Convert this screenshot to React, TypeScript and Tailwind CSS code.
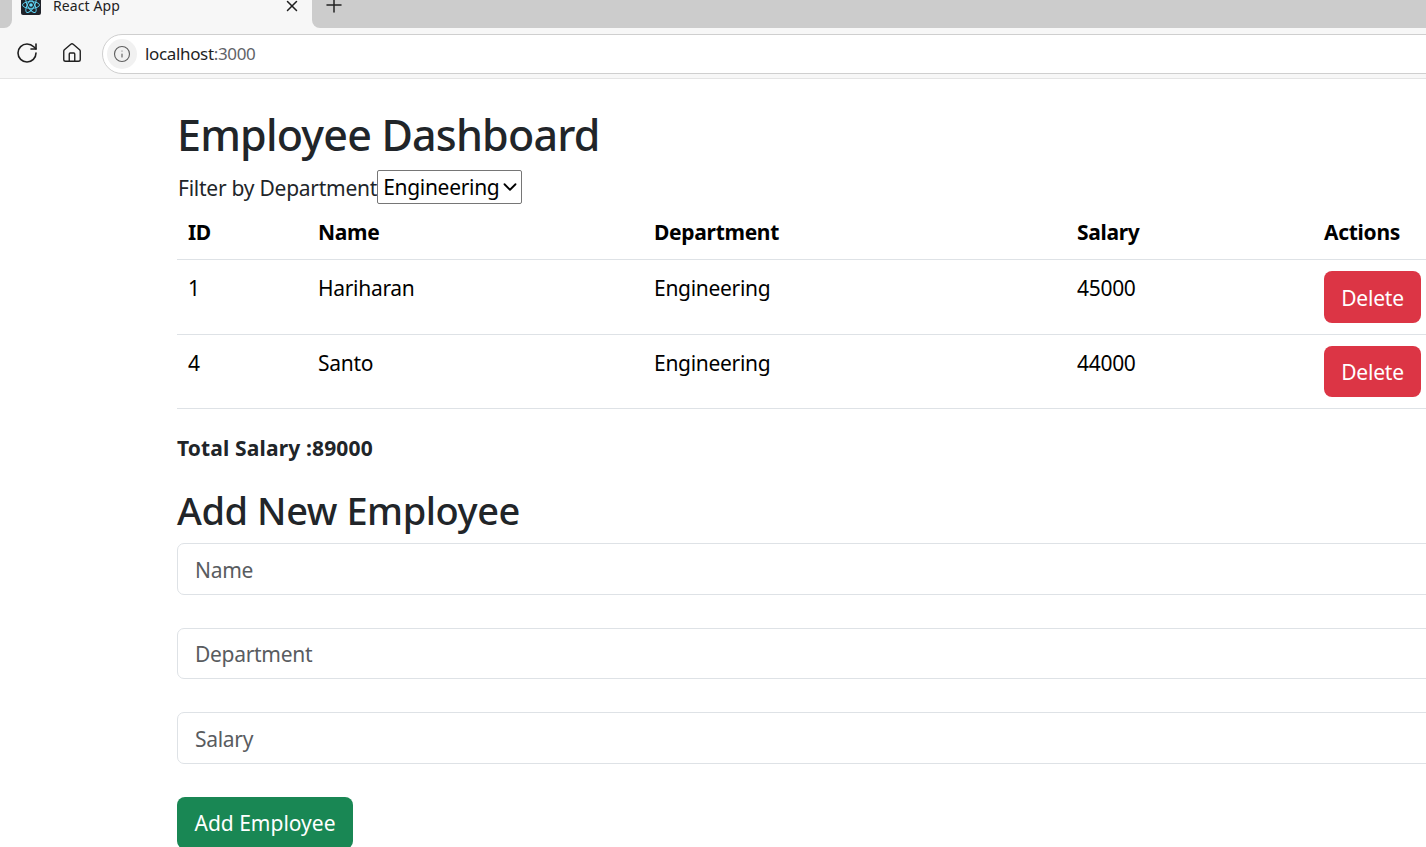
import React from "react";
import { RotateCw, Home, X, Plus, Info, ChevronDown } from "lucide-react";

const rows = [
  { id: 1, name: "Hariharan", dept: "Engineering", salary: 45000, h: "h-[75px]", btn: "h-[52px]" },
  { id: 4, name: "Santo", dept: "Engineering", salary: 44000, h: "h-[74px]", btn: "h-[51px]" },
];

function ReactLogo() {
  return (
    <svg viewBox="0 0 20 20" className="w-[20px] h-[20px] shrink-0 rounded-[2px] bg-[#20232a] -mt-[5px]">
      <circle cx="10" cy="10" r="1.8" fill="#61dafb" />
      <g fill="none" stroke="#61dafb" strokeWidth="0.9">
        <ellipse cx="10" cy="10" rx="8.5" ry="3.4" />
        <ellipse cx="10" cy="10" rx="8.5" ry="3.4" transform="rotate(60 10 10)" />
        <ellipse cx="10" cy="10" rx="8.5" ry="3.4" transform="rotate(120 10 10)" />
      </g>
    </svg>
  );
}

function Field({ placeholder, cls }: { placeholder: string; cls: string }) {
  return (
    <input
      placeholder={placeholder}
      className={`block w-[1300px] shrink-0 px-[17px] pt-[2px] rounded-[7px] border border-[#dee2e6] bg-white text-[21px] tracking-[-0.3px] text-[#212529] placeholder:text-[#595c5f] outline-none ${cls}`}
    />
  );
}

export default function App() {
  return (
    <div className="w-[1426px] h-[847px] overflow-hidden bg-white font-['Noto_Sans','Open_Sans',sans-serif] text-[#212529]">
      <div className="h-[28px] bg-[#f7f7f7] flex items-start overflow-hidden">
        <div className="w-[12px] h-full shrink-0 bg-[#cccccc] rounded-br-[8px]" />
        <div className="w-[300px] h-full shrink-0 flex items-start pl-[9px] pr-[11px]">
          <ReactLogo />
          <span className="ml-[12px] text-[14px] leading-[20px] text-[#1f1f1f] -mt-[4px] tracking-[0.1px] whitespace-nowrap">React App</span>
          <X className="ml-auto -mt-[3px] shrink-0 text-[#1f1f1f]" size={18} strokeWidth={2} />
        </div>
        <div className="flex-1 h-full bg-[#cccccc] rounded-bl-[8px] flex items-start pl-[10px]">
          <Plus className="-mt-[7px] shrink-0 text-[#222]" size={24} strokeWidth={1.5} />
        </div>
      </div>
      <div className="h-[51px] bg-[#f7f7f7] border-b border-[#e4e4e4] flex items-center overflow-hidden">
        <RotateCw className="ml-[15px] shrink-0 text-[#1f1f1f]" size={24} strokeWidth={1.6} />
        <Home className="ml-[22px] shrink-0 text-[#1f1f1f]" size={22} strokeWidth={1.5} />
        <div className="ml-[19px] mt-[2px] w-[1400px] h-[40px] shrink-0 rounded-[20px] border border-[#cfcfcf] bg-white flex items-center pl-[4px]">
          <div className="w-[30px] h-[30px] rounded-full bg-[#f1f1f1] flex items-center justify-center">
            <Info className="text-[#5f5f5f]" size={18} strokeWidth={1.5} />
          </div>
          <span className="ml-[8px] text-[17px] tracking-[-0.35px] text-[#1f1f1f]">
            localhost<span className="text-[#5f6368]">:3000</span>
          </span>
        </div>
      </div>

      <div className="pl-[177px] w-[1500px]">
        <h1 className="pt-[27px] h-[91px] text-[43px] leading-[58px] font-medium tracking-[-0.8px]">Employee Dashboard</h1>
        <div className="h-[34px] flex items-center text-[21px]">
          <span className="pt-[4px] pl-[1px] tracking-[-0.25px] text-[#212529]">Filter by Department</span>
          <div className="relative">
            <select className="block w-[145px] h-[34px] pt-[1px] appearance-none border border-[#767676] rounded-[2px] bg-white text-black pl-[5px] tracking-[-0.3px] outline-none">
              <option>Engineering</option>
            </select>
            <ChevronDown className="absolute right-[1px] top-[6px] text-black pointer-events-none" size={22} strokeWidth={2} />
          </div>
        </div>
        <table className="w-[1255px] border-collapse text-[21px] tracking-[-0.3px] text-black table-fixed">
          <thead>
            <tr className="h-[55px] border-b border-[#dee2e6]">
              <th className="w-[130px] text-left font-bold px-[11px] pt-[2px]">ID</th>
              <th className="w-[336px] text-left font-bold px-[11px] pt-[2px]">Name</th>
              <th className="w-[423px] text-left font-bold px-[11px] pt-[2px]">Department</th>
              <th className="w-[247px] text-left font-bold px-[11px] pt-[2px]">Salary</th>
              <th className="text-left font-bold px-[11px] pt-[2px]">Actions</th>
            </tr>
          </thead>
          <tbody>
            {rows.map((r) => (
              <tr key={r.id} className={`${r.h} border-b border-[#dee2e6]`}>
                <td className="px-[11px] pt-[13px] align-top">{r.id}</td>
                <td className="px-[11px] pt-[13px] align-top">{r.name}</td>
                <td className="px-[11px] pt-[13px] align-top">{r.dept}</td>
                <td className="px-[11px] pt-[13px] align-top">{r.salary}</td>
                <td className="px-[11px] align-middle">
                  <button className={`w-[97px] ${r.btn} pt-[4px] rounded-[8px] bg-[#dc3545] text-white text-[21px] tracking-[-0.2px] flex items-center justify-center`}>Delete</button>
                </td>
              </tr>
            ))}
          </tbody>
        </table>
        <h5 className="mt-[24px] h-[31px] text-[21px] leading-[31px] font-bold tracking-[0.15px]">Total Salary :89000</h5>
        <h2 className="mt-[20px] h-[52px] text-[38px] leading-[52px] font-medium tracking-[-0.45px]">Add New Employee</h2>
        <Field placeholder="Name" cls="h-[52px] mt-[7px] mb-[33px]" />
        <Field placeholder="Department" cls="h-[51px] mb-[33px]" />
        <Field placeholder="Salary" cls="h-[52px] mb-[33px]" />
        <button className="w-[176px] h-[52px] pt-[2px] rounded-[8px] bg-[#198754] text-white text-[21px] flex items-center justify-center">Add Employee</button>
      </div>
    </div>
  );
}
